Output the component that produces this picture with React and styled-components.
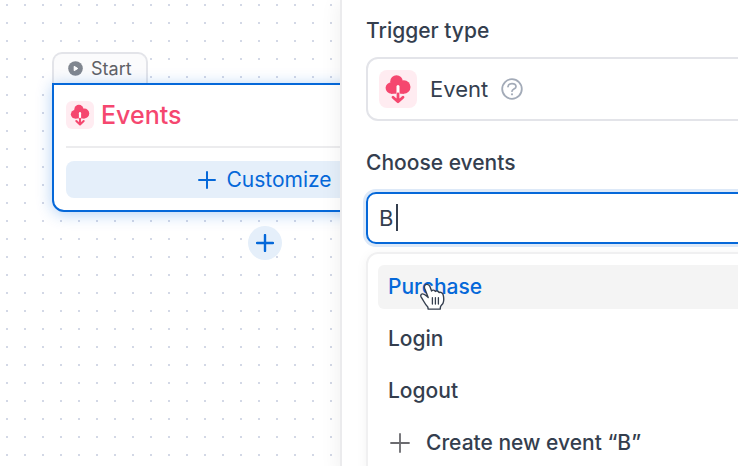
import React, { useState } from "react";
import styled, { createGlobalStyle } from "styled-components";

const GlobalStyle = createGlobalStyle`
  * {
    box-sizing: border-box;
  }

  body {
    margin: 0;
    color: #343e4e;
    background: #fff;
    font-family: Inter, "Liberation Sans", sans-serif;
    font-size: 21px;
    line-height: 24px;
  }

  button, input, select {
    font: inherit;
    color: inherit;
  }
`;

const Page = styled.div`
  display: grid;
  grid-template-columns: 340px minmax(0, 1fr);
  height: 100vh;
  overflow: hidden;
`;

const Canvas = styled.main`
  position: relative;
  overflow: hidden;
  background-color: #fff;
  background-image: conic-gradient(
    from 270deg at 2px 2px,
    #d3d8e6 90deg,
    transparent 0
  );
  background-size: 18px 18px;
  background-position: 6px 4px;
`;

const Node = styled.section`
  position: absolute;
  top: 52px;
  left: 52px;
  width: 426px;
  display: flex;
  flex-direction: column;
  align-items: center;
`;

const NodeTab = styled.div`
  align-self: flex-start;
  display: flex;
  align-items: center;
  gap: 8px;
  height: 31px;
  padding: 0 14px;
  border: 2px solid #e3e4e9;
  border-bottom: none;
  border-radius: 10px 10px 0 0;
  background: #fbfbfc;
  color: #5f6166;
  font-size: 18px;
`;

const NodeCard = styled.div`
  width: 100%;
  padding: 16px 12px 12px;
  border: 2px solid #0568d9;
  border-radius: 0 12px 12px 12px;
  background: #fff;
  box-shadow: 0 2px 16px rgba(5, 104, 217, 0.3);
`;

const NodeHeader = styled.header`
  display: flex;
  align-items: center;
  gap: 7px;
  padding-bottom: 17px;
  border-bottom: 2px solid #ececee;
`;

const NodeTitle = styled.h2`
  margin: 0;
  color: #f5476f;
  font-size: 25px;
  font-weight: 500;
  line-height: 28px;
`;

const CustomizeBtn = styled.button`
  display: flex;
  align-items: center;
  justify-content: center;
  gap: 10px;
  width: 100%;
  height: 37px;
  margin-top: 13px;
  padding: 0;
  border: none;
  border-radius: 8px;
  background: #e5effa;
  color: #0568d9;
`;

const AddBtn = styled.button`
  display: flex;
  align-items: center;
  justify-content: center;
  width: 34px;
  height: 34px;
  margin-top: 14px;
  padding: 0;
  border: none;
  border-radius: 50%;
  background: #e5effa;
  color: #0568d9;
`;

const IconTile = styled.span`
  display: flex;
  flex: none;
  width: ${(props) => props.$size}px;
  height: ${(props) => props.$size}px;
  border-radius: ${(props) => props.$radius}px;
  background: #ffecf1;
`;

const Panel = styled.aside`
  position: relative;
  padding: 19px 0 0 24px;
  border-left: 2px solid #ebebed;
  background: #fff;
  box-shadow: 0 0 20px rgba(0, 0, 0, 0.07);
`;

const Form = styled.form`
  display: flex;
  flex-direction: column;
  margin-right: -24px;
`;

const Label = styled.label`
  margin-bottom: ${(props) => props.$gap || 14}px;
  font-weight: 500;
`;

const TriggerBox = styled.div`
  display: flex;
  align-items: center;
  height: 64px;
  margin-bottom: 30px;
  padding: 0 11px;
  border: 2px solid #e3e4e9;
  border-radius: 12px;
`;

const TriggerSelect = styled.select`
  margin: 0 12px 0 13px;
  padding: 0;
  border: none;
  outline: none;
  background: none;
  appearance: none;
  font-size: 22px;
  line-height: 28px;
`;

const HelpBtn = styled.button`
  display: flex;
  padding: 0;
  border: none;
  background: none;
  color: #a3abb8;
`;

const Field = styled.div`
  position: relative;
  display: flex;
`;

const EventInput = styled.input`
  width: 100%;
  height: 52px;
  padding: 0 11px;
  border: 2px solid #0568d9;
  border-radius: 10px;
  outline: none;
  background: #fff;
  box-shadow: 0 0 0 3px #dde9f8;
  caret-color: transparent;
  font-size: 22px;
`;

const Caret = styled.span`
  position: absolute;
  top: 12px;
  left: 30px;
  width: 2px;
  height: 27px;
  background: #343e4e;
`;

const Menu = styled.ul`
  display: flex;
  flex-direction: column;
  gap: 8px;
  margin: 8px 0 0;
  padding: 11px 10px;
  border: 2px solid #f0f0f1;
  border-radius: 12px;
  list-style: none;
  box-shadow: 0 2px 12px rgba(0, 0, 0, 0.05);
`;

const MenuItem = styled.button`
  display: flex;
  align-items: center;
  gap: 14px;
  width: 100%;
  height: 44px;
  padding: 0 10px;
  border: none;
  border-radius: 6px;
  background: ${(props) => (props.$active ? "#f4f4f4" : "none")};
  color: ${(props) => (props.$active ? "#0568d9" : "#343e4e")};
  font-weight: 500;
`;

const Pointer = styled.svg`
  position: absolute;
  top: 283px;
  left: 78px;
  pointer-events: none;
`;

const CloudIcon = ({ size }) => (
  <svg width={size} height={size} viewBox="0 0 38 38" fill="none">
    <g fill="#f5476f">
      <circle cx="17.5" cy="11.5" r="6.3" />
      <circle cx="12.4" cy="18" r="5.8" />
      <circle cx="24.8" cy="17" r="6.7" />
      <path d="M12 12h13v11.7H12z" />
    </g>
    <path d="M19 16.5V25" stroke="#fff" strokeWidth="3" strokeLinecap="round" />
    <path
      d="M19 24v7M14 27.2l5 4.6 5-4.6"
      stroke="#f5476f"
      strokeWidth="2.8"
      strokeLinecap="round"
      strokeLinejoin="round"
    />
  </svg>
);

const PlayIcon = () => (
  <svg width="15" height="15" viewBox="0 0 15 15">
    <circle cx="7.5" cy="7.5" r="7.3" fill="#80868f" />
    <path
      d="M6.2 5.3v4.4l3.6-2.2z"
      fill="#fff"
      stroke="#fff"
      strokeLinejoin="round"
    />
  </svg>
);

const PlusIcon = ({ size, inset = 1, weight = 2, color = "currentColor" }) => (
  <svg width={size} height={size} viewBox={`0 0 ${size} ${size}`}>
    <path
      d={`M${size / 2} ${inset}V${size - inset}M${inset} ${size / 2}H${size - inset}`}
      stroke={color}
      strokeWidth={weight}
      strokeLinecap="round"
    />
  </svg>
);

const HelpIcon = () => (
  <svg width="22" height="22" viewBox="0 0 22 22" fill="none">
    <circle cx="11" cy="11" r="9.8" stroke="currentColor" strokeWidth="1.8" />
    <path
      d="M7 8.7C7.2 6.9 8.8 5.6 11 5.6s4 1.3 4 3.1c0 2.4-4 2.3-4 4.5"
      stroke="currentColor"
      strokeWidth="1.7"
      strokeLinecap="round"
    />
    <circle cx="11" cy="16.3" r="1.1" fill="currentColor" />
  </svg>
);

const HandPointer = () => (
  <Pointer width="26" height="28" viewBox="0 0 26 28">
    <path
      d="M8.2 14.6 4.6 5.2C3.9 3.2 5 1.7 6.6 1.4c1.5-.2 2.7.6 3.3 2.1L11.6 8c.8-1.3 3-1.2 3.7.4 1.3-1 3.1-.5 3.7 1.1 1.6-.7 3.6.1 4.1 2.1.7 2.6 1 5.7 0 8.4-.6 1.6-2.4 2.4-2.7 4.2l-.2 1.9H8.2L7.8 24C5 21.5 3.5 17.5 1.2 14.1c-.9-1.5-.3-2.9 1.2-3.2 2.2-.3 3.7 1.7 5.8 3.7z"
      fill="#fff"
      stroke="#343e4e"
      strokeWidth="1.4"
      strokeLinejoin="round"
    />
    <path
      d="M12.4 14.7v6.4M15.4 14.7v6.4M18.4 14.7v6.4"
      stroke="#343e4e"
      strokeWidth="1.3"
      strokeLinecap="round"
    />
  </Pointer>
);

const EVENTS = ["Purchase", "Login", "Logout"];

const App = () => {
  const [query, setQuery] = useState("B");

  return (
    <Page>
      <GlobalStyle />
      <Canvas>
        <Node>
          <NodeTab>
            <PlayIcon />
            Start
          </NodeTab>
          <NodeCard>
            <NodeHeader>
              <IconTile $size={28} $radius={6}>
                <CloudIcon size={28} />
              </IconTile>
              <NodeTitle>Events</NodeTitle>
            </NodeHeader>
            <CustomizeBtn type="button">
              <PlusIcon size={18} />
              Customize
            </CustomizeBtn>
          </NodeCard>
          <AddBtn type="button" aria-label="Add step">
            <PlusIcon size={18} weight={2.4} />
          </AddBtn>
        </Node>
      </Canvas>

      <Panel>
        <Form>
          <Label htmlFor="trigger-type">Trigger type</Label>
          <TriggerBox>
            <IconTile $size={38} $radius={8}>
              <CloudIcon size={38} />
            </IconTile>
            <TriggerSelect id="trigger-type" defaultValue="event">
              <option value="event">Event</option>
            </TriggerSelect>
            <HelpBtn type="button" aria-label="Help">
              <HelpIcon />
            </HelpBtn>
          </TriggerBox>

          <Label htmlFor="events" $gap={17}>
            Choose events
          </Label>
          <Field>
            <EventInput
              id="events"
              autoComplete="off"
              value={query}
              onChange={(e) => setQuery(e.target.value)}
            />
            <Caret />
          </Field>

          <Menu>
            {EVENTS.map((name, i) => (
              <li key={name}>
                <MenuItem type="button" $active={i === 0}>
                  {name}
                </MenuItem>
              </li>
            ))}
            <li>
              <MenuItem type="button">
                <PlusIcon size={24} inset={3} weight={1.8} color="#6b6b6f" />
                {`Create new event “${query}”`}
              </MenuItem>
            </li>
          </Menu>
        </Form>
        <HandPointer />
      </Panel>
    </Page>
  );
};

export default App;
